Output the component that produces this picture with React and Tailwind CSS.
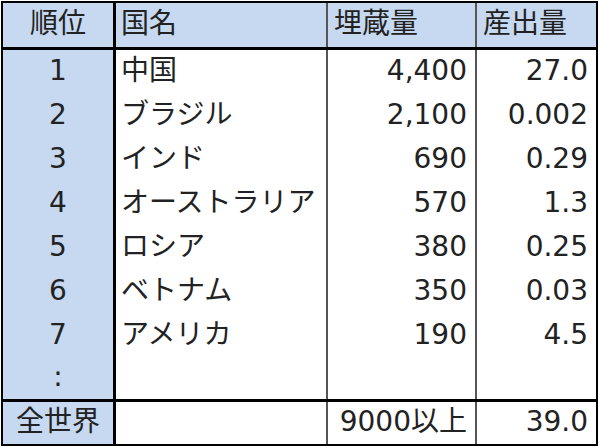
import React from "react";

const rows = [
  ["1", "中国", "4,400", "27.0"],
  ["2", "ブラジル", "2,100", "0.002"],
  ["3", "インド", "690", "0.29"],
  ["4", "オーストラリア", "570", "1.3"],
  ["5", "ロシア", "380", "0.25"],
  ["6", "ベトナム", "350", "0.03"],
  ["7", "アメリカ", "190", "4.5"],
  [":", "", "", ""],
];

function Row({ cells, h, header, bottomBorder }) {
  const bg = header ? "bg-[#c6d9f0]" : "bg-white";
  const bb = bottomBorder ? "border-b-[3px] border-b-black" : "";
  return (
    <div className={`flex ${bb}`} style={{ height: h }}>
      <div className="w-[113px] shrink-0 bg-[#c6d9f0] border-r-[3px] border-r-black flex items-center justify-center pb-[3px]">
        {cells[0]}
      </div>
      <div className={`w-[212px] shrink-0 ${bg} border-r-2 border-r-[#555] flex items-center pl-[5px] pb-[3px]`}>
        {cells[1]}
      </div>
      <div className={`w-[149px] shrink-0 ${bg} border-r-2 border-r-[#555] flex items-center pb-[3px] ${header ? "justify-start pl-[6px]" : "justify-end pr-[8px]"}`}>
        {cells[2]}
      </div>
      <div className={`flex-1 ${bg} flex items-center pb-[3px] ${header ? "justify-start pl-[6px]" : "justify-end pr-[8px]"}`}>
        {cells[3]}
      </div>
    </div>
  );
}

export default function App() {
  return (
    <div className="w-[600px] h-[448px] bg-white pt-[1px] pl-[1px]">
      <div
        className="w-[597px] border-2 border-black text-[#222] text-[28px] leading-none"
        style={{ fontFamily: '"DejaVu Sans", "Noto Sans CJK JP", sans-serif' }}
      >
        <Row cells={["順位", "国名", "埋蔵量", "産出量"]} h={47} header bottomBorder />
        {rows.map((r, i) => (
          <Row key={i} cells={r} h={44} bottomBorder={i === rows.length - 1} />
        ))}
        <Row cells={["全世界", "", "9000以上", "39.0"]} h={42} />
      </div>
    </div>
  );
}
